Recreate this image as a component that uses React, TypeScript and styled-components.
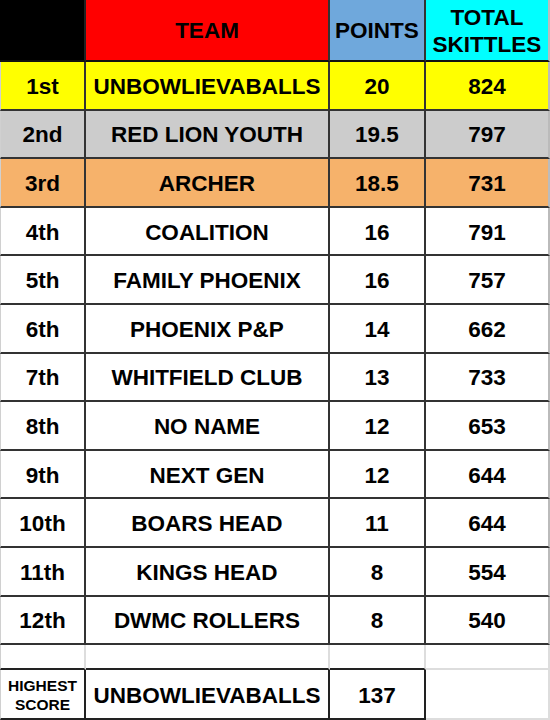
import React from "react";
import styled, { createGlobalStyle } from "styled-components";

const GlobalStyle = createGlobalStyle`
  body {
    margin: 0;
    background: #ffffff;
    font-family: "Liberation Sans", Arial, sans-serif;
  }
`;

interface Standing {
  rank: string;
  team: string;
  points: string;
  skittles: string;
  bg?: string;
}

const standings: Standing[] = [
  { rank: "1st", team: "UNBOWLIEVABALLS", points: "20", skittles: "824", bg: "#ffff00" },
  { rank: "2nd", team: "RED LION YOUTH", points: "19.5", skittles: "797", bg: "#cccccc" },
  { rank: "3rd", team: "ARCHER", points: "18.5", skittles: "731", bg: "#f6b26b" },
  { rank: "4th", team: "COALITION", points: "16", skittles: "791" },
  { rank: "5th", team: "FAMILY PHOENIX", points: "16", skittles: "757" },
  { rank: "6th", team: "PHOENIX P&P", points: "14", skittles: "662" },
  { rank: "7th", team: "WHITFIELD CLUB", points: "13", skittles: "733" },
  { rank: "8th", team: "NO NAME", points: "12", skittles: "653" },
  { rank: "9th", team: "NEXT GEN", points: "12", skittles: "644" },
  { rank: "10th", team: "BOARS HEAD", points: "11", skittles: "644" },
  { rank: "11th", team: "KINGS HEAD", points: "8", skittles: "554" },
  { rank: "12th", team: "DWMC ROLLERS", points: "8", skittles: "540" },
];

const Sheet = styled.div`
  width: 550px;
  display: flex;
  flex-direction: column;
`;

const Row = styled.div<{ $height: number; $bg?: string }>`
  display: grid;
  grid-template-columns: 86px 244px 96px 124px;
  height: ${({ $height }) => $height}px;
  background: ${({ $bg }) => $bg || "#ffffff"};
`;

const Cell = styled.div<{ $bg?: string; $line?: string; $bottom?: string; $first?: boolean }>`
  box-sizing: border-box;
  display: flex;
  align-items: center;
  justify-content: center;
  text-align: center;
  padding-top: 3px;
  font-size: 22.5px;
  font-weight: 700;
  color: #000;
  background: ${({ $bg }) => $bg || "transparent"};
  border-right: 2px solid ${({ $line }) => $line || "#333333"};
  border-bottom: 2px solid ${({ $bottom, $line }) => $bottom || $line || "#333333"};
  border-left: ${({ $first }) => ($first ? "1px solid #d0d0d0" : "none")};
`;

const HeaderCell = styled(Cell)`
  line-height: 27px;
  border-bottom-color: #111111;
  padding-top: 1px;
`;

const SmallLabel = styled(Cell)`
  font-size: 15.5px;
  line-height: 19px;
  padding-top: 1px;
`;

const App: React.FC = () => {
  return (
    <>
      <GlobalStyle />
      <Sheet>
        <Row $height={62}>
          <HeaderCell $bg="#000000" $line="#222" />
          <HeaderCell $bg="#ff0000" $line="#333">TEAM</HeaderCell>
          <HeaderCell $bg="#6fa8dc" $line="#333">POINTS</HeaderCell>
          <HeaderCell $bg="#00ffff" $line="#bbb">
            TOTAL
            <br />
            SKITTLES
          </HeaderCell>
        </Row>

        {standings.map((s) => (
          <Row key={s.rank} $height={48.6} $bg={s.bg}>
            <Cell $first>{s.rank}</Cell>
            <Cell>{s.team}</Cell>
            <Cell>{s.points}</Cell>
            <Cell $line="#bbb" $bottom="#333333">
              {s.skittles}
            </Cell>
          </Row>
        ))}

        <Row $height={25}>
          <Cell $first $line="#dddddd" $bottom="#222222" />
          <Cell $line="#dddddd" $bottom="#222222" />
          <Cell $line="#dddddd" $bottom="#222222" />
          <Cell $line="#dddddd" />
        </Row>

        <Row $height={50}>
          <SmallLabel $first $line="#222222">
            HIGHEST
            <br />
            SCORE
          </SmallLabel>
          <Cell $line="#222222">UNBOWLIEVABALLS</Cell>
          <Cell $line="#222222">137</Cell>
          <Cell $line="#dddddd" />
        </Row>
      </Sheet>
    </>
  );
};

export default App;
